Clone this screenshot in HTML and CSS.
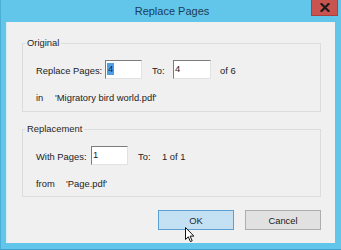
FILE: index.html
```html
<!DOCTYPE html>
<html lang="en">
  <head>
    <meta charset="utf-8">
    <title>Replace Pages</title>
    <link rel="stylesheet" href="styles.css">
  </head>
  <body>
    <div class="window">

      <div class="titlebar">
        <span></span>
        <span class="title">Replace Pages</span>
        <div class="close-cell">
          <div class="close">
            <svg width="10" height="9" viewBox="0 0 10 9">
              <path d="M1.5 1 L8.5 8 M8.5 1 L1.5 8" stroke="#1c1c1c" stroke-width="2.2" stroke-linecap="square"/>
            </svg>
          </div>
        </div>
      </div>

      <div class="client">

        <fieldset class="group">
          <legend>Original</legend>
          <div class="rows">
            <div class="row">
              <span class="label w-replace">Replace Pages:</span>
              <span class="field"><span class="sel">4</span></span>
              <span class="label w-to">To:</span>
              <span class="field field-wide">4</span>
              <span class="label w-of">of 6</span>
            </div>
            <div class="row row-text">
              <span class="label w-in">in</span>
              <span>'Migratory bird world.pdf'</span>
            </div>
          </div>
        </fieldset>

        <fieldset class="group group-second">
          <legend>Replacement</legend>
          <div class="rows rows-second">
            <div class="row">
              <span class="label w-with">With Pages:</span>
              <span class="field">1</span>
              <span class="label w-to2">To:</span>
              <span class="label">1 of 1</span>
            </div>
            <div class="row row-text">
              <span class="label w-from">from</span>
              <span>'Page.pdf'</span>
            </div>
          </div>
        </fieldset>

        <div class="buttons">
          <div class="btn btn-default">OK</div>
          <div class="btn">Cancel</div>
        </div>

      </div>

      <!-- mouse pointer over the OK button -->
      <svg class="cursor" width="10" height="16" viewBox="0 0 10 16">
        <path d="M0.5 0.5 L0.5 12.5 L3.3 9.8 L5.4 14.6 L7.2 13.8 L5.1 9.1 L8.9 9.1 Z" fill="#fff" stroke="#111" stroke-width="1" stroke-linejoin="round"/>
      </svg>

    </div>
  </body>
</html>
```

FILE: styles.css
```css
body {
  margin: 0;
  font-family: "Liberation Sans", Arial, sans-serif;
  font-size: 9.4px;
  color: #232323;
}

.window
{
  position: relative;
  width: 341px;
  height: 250px;
  box-sizing: border-box;
  background-color: #62c6ea;
  border-left: 1px solid #4aaed6;
  border-bottom: 1px solid #3f9fca;
  display: flex;
  flex-direction: column;
}

.titlebar
{
  height: 22px;
  display: grid;
  grid-template-columns: 1fr auto 1fr;
  align-items: center;
}

.title
{
  font-size: 11px;
  color: #1c3b58;
  margin-left: 2px;
}

.close-cell
{
  display: flex;
  justify-content: flex-end;
  align-self: start;
}

.close
{
  width: 27px;
  height: 16px;
  margin-right: 3px;
  box-sizing: border-box;
  background-color: #c9534e;
  border: 1px solid #a9403c;
  border-top: 0;
  display: flex;
  justify-content: center;
  align-items: center;
}

.client
{
  margin: 0 6px 0 5px;
  height: 221px;
  box-sizing: border-box;
  background-color: #f0f0f0;
  border-left: 1px solid #d9edf6;
  padding: 15px 14px 13px 15px;
  display: flex;
  flex-direction: column;
}

.group
{
  margin: 0;
  padding: 0;
  min-width: 0;
  border: 1px solid #dcdcdc;
}

.group legend
{
  margin-left: 2px;
  padding: 0 2px;
  line-height: 12px;
  color: #262626;
}

.group-second
{
  margin-top: 11px;
}

.rows
{
  padding: 11px 13px 8px 13px;
}

.rows-second
{
  padding-bottom: 7px;
}

.row
{
  display: flex;
  align-items: center;
  height: 19px;
}

.row-text
{
  height: 12px;
  margin-top: 12px;
}

.label
{
  flex-shrink: 0;
  padding-top: 2px;
}

.row-text .label
{
  padding-top: 0;
}

.w-replace { width: 69px; }
.w-to { width: 21px; margin-left: 10px; }
.w-to2 { width: 24px; margin-left: 10px; }
.w-of { margin-left: 9px; }
.w-with { width: 55px; }
.w-in { width: 19px; }
.w-from { width: 30px; }

.field
{
  width: 37px;
  height: 19px;
  box-sizing: border-box;
  background-color: #fff;
  border-style: solid;
  border-width: 1px;
  border-color: #7c7c7c #e2e2e2 #e2e2e2 #7c7c7c;
  padding: 2px 0 0 1px;
  line-height: 12px;
  color: #1a1a1a;
}

.field-wide
{
  width: 38px;
}

.sel
{
  display: inline-block;
  padding: 0 1px;
  background-color: #4d9fe3;
  color: #15235e;
}

.buttons
{
  display: flex;
  justify-content: flex-end;
  gap: 11px;
  margin-top: 13px;
}

.btn
{
  width: 76px;
  height: 20px;
  box-sizing: border-box;
  display: flex;
  justify-content: center;
  align-items: center;
  background-color: #e1e1e1;
  border: 1px solid #adadad;
  color: #222;
}

.btn-default
{
  background-color: #c4e0f3;
  border-color: #5b9fd3;
  color: #1f2a36;
}

.cursor
{
  position: absolute;
  left: 184px;
  top: 227px;
}
```
